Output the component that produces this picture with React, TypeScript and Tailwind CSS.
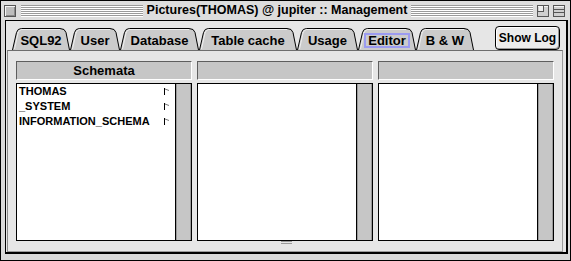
import React from 'react';

type Tab = { label: string; w: number; cls: string; focus?: boolean };

const tabs: Tab[] = [
  { label: 'SQL92', w: 58, cls: 'w-[58px]' },
  { label: 'User', w: 50, cls: 'w-[50px]' },
  { label: 'Database', w: 79, cls: 'w-[79px]' },
  { label: 'Table cache', w: 98, cls: 'w-[98px]' },
  { label: 'Usage', w: 61, cls: 'w-[61px]' },
  { label: 'Editor', w: 58, cls: 'w-[58px]', focus: true },
  { label: 'B & W', w: 58, cls: 'w-[58px]' },
];

const Stripes = () => (
  <div className="flex-1 flex flex-col">
    {[0, 1, 2, 3, 4, 5].map((i) => (
      <div key={i}>
        <div className="h-px bg-[#9a9a9a]" />
        <div className="h-px bg-white" />
      </div>
    ))}
  </div>
);

const TabShape = ({ w }: { w: number }) => (
  <svg className="absolute inset-0" width={w} height={22} viewBox={`0 0 ${w} 22`}>
    <path
      d={`M0.5,22 L4.5,4.5 Q5.5,0.5 9.5,0.5 L${w - 10},0.5 Q${w - 5},0.5 ${w - 4},4.5 L${w - 0.5},22`}
      fill="#cbcbcb"
      stroke="#000"
    />
    <path d={`M2.5,21 L6,5 Q6.8,1.8 9.5,1.5 L${w - 10},1.5`} fill="none" stroke="#efefef" />
  </svg>
);

const Flag = () => (
  <svg width="6" height="7" viewBox="0 0 6 7">
    <line x1="0.5" y1="0" x2="0.5" y2="7" stroke="#000" />
    <line x1="1" y1="1" x2="5" y2="2.5" stroke="#777" />
  </svg>
);

const Column = ({ title, items }: { title: string; items: string[] }) => (
  <div className="w-[176px] flex flex-col">
    <div className="h-[19px] border border-t-[#5e5e5e] border-l-[#5e5e5e] border-r-white border-b-white bg-[#c6c6c6] flex items-center justify-center text-[13px] font-bold text-black leading-none">
      {title}
    </div>
    <div className="mt-[3px] h-[158px] border border-black bg-white flex">
      <div className="flex-1 flex flex-col pl-[2px] pr-[5px]">
        {items.map((it) => (
          <div key={it} className="h-[15px] flex items-center justify-between text-[11px] font-bold text-black leading-none">
            <span>{it}</span>
            <Flag />
          </div>
        ))}
      </div>
      <div className="w-[16px] border-l border-black bg-[#c6c6c6] shadow-[inset_1px_0_0_#9a9a9a,inset_-1px_0_0_#9a9a9a]" />
    </div>
  </div>
);

export default function App() {
  return (
    <div className="w-[571px] h-[261px] border border-black bg-[#d9d9d9] flex flex-col font-['Liberation_Sans',Arial,sans-serif] select-none">
      {/* title bar */}
      <div className="h-[19px] flex items-center pl-[3px] pr-[5px] bg-[#dddddd]">
        <div className="w-[12px] h-[12px] border border-[#555] bg-[#bdbdbd] shadow-[inset_1px_1px_0_#f4f4f4,inset_-1px_-1px_0_#8a8a8a]" />
        <div className="flex-1 flex items-center ml-[5px] mr-[2px]">
          <Stripes />
        </div>
        <div className="text-[12.5px] font-bold text-black leading-none px-[2px]">
          Pictures(THOMAS) @ jupiter :: Management
        </div>
        <div className="flex-1 flex items-center ml-[2px] mr-[4px]">
          <Stripes />
        </div>
        <svg width="12" height="12" viewBox="0 0 12 12" className="mr-[4px]">
          <rect x="0.5" y="0.5" width="11" height="11" fill="#cfcfcf" stroke="#555" />
          <rect x="1" y="1" width="10" height="1" fill="#f4f4f4" />
          <rect x="0.5" y="0.5" width="6" height="6" fill="none" stroke="#555" />
          <rect x="2" y="2" width="4" height="4" fill="#eee" />
        </svg>
        <svg width="12" height="12" viewBox="0 0 12 12">
          <rect x="0.5" y="0.5" width="11" height="11" fill="#cfcfcf" stroke="#555" />
          <line x1="1" y1="4.5" x2="11" y2="4.5" stroke="#555" />
          <line x1="1" y1="7.5" x2="11" y2="7.5" stroke="#555" />
          <rect x="1" y="1" width="10" height="1" fill="#f4f4f4" />
        </svg>
      </div>

      {/* body */}
      <div className="flex-1 flex pl-[4px] pr-[2px] pb-[6px]">
        <div className="flex-1 flex flex-col border-t border-l border-r-2 border-b-2 border-black bg-[#e6e6e6]">
          {/* tab row */}
          <div className="h-[29px] flex items-end">
            <div className="flex ml-[6px]">
              {tabs.map((t) => (
                <div key={t.label} className={`relative h-[22px] ${t.cls} flex items-center justify-center pt-[2px]`}>
                  <TabShape w={t.w} />
                  {t.focus ? (
                    <span className="relative h-[15px] px-[2px] border-2 border-[#9b9bf0] flex items-center text-[13px] font-bold text-black leading-none">
                      {t.label}
                    </span>
                  ) : (
                    <span className="relative text-[13px] font-bold text-black leading-none">{t.label}</span>
                  )}
                </div>
              ))}
            </div>
            <div className="flex-1" />
            <button className="mr-[6px] w-[65px] h-[24px] border border-black rounded-[4px] bg-[#ececec] shadow-[inset_1px_1px_0_#fff,inset_-1px_-1px_0_#999] flex items-center justify-center text-[12px] font-bold text-black leading-none">
              Show Log
            </button>
          </div>

          {/* tab pane */}
          <div className="ml-[1px] mr-[3px] h-[202px] border border-t-[#6e6e6e] border-l-[#8a8a8a] border-r-[#9a9a9a] border-b-[#9a9a9a] flex flex-col pt-[10px] px-[8px]">
            <div className="flex gap-[5px]">
              <Column title="Schemata" items={['THOMAS', '_SYSTEM', 'INFORMATION_SCHEMA']} />
              <Column title="" items={[]} />
              <Column title="" items={[]} />
            </div>
            <div className="flex flex-col items-center gap-px pl-[2px]">
              <div className="h-px w-[11px] bg-[#9a9a9a]" />
              <div className="h-px w-[11px] bg-[#9a9a9a]" />
            </div>
          </div>
        </div>
      </div>
    </div>
  );
}
